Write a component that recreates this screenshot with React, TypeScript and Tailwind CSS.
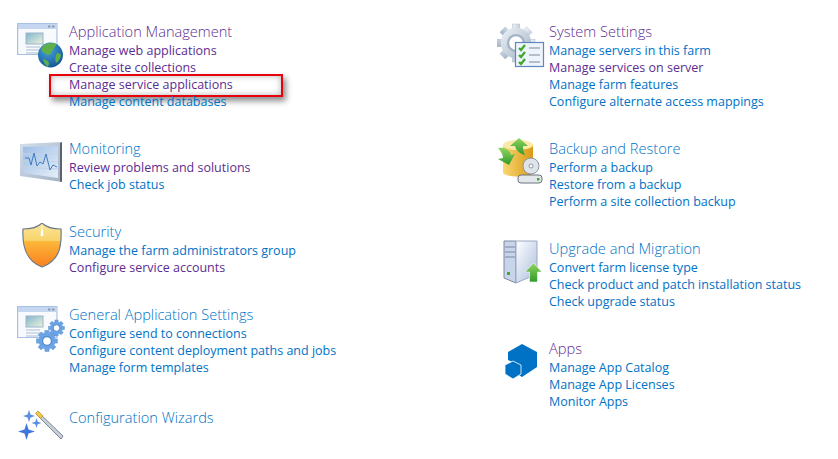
import { ReactNode } from "react";

const BLUE = "text-[#0072c6]";
const PURPLE = "text-[#5c2d91]";

type LinkItem = { text: string; visited?: boolean; boxed?: boolean };

const BrowserWindow = () => (
  <>
    <rect x="0.5" y="0.5" width="39.500" height="31" fill="#e4ebf7" stroke="#a9c0e6" />
    <rect x="1" y="1" width="38.500" height="5" fill="#c5d6f0" />
    <rect x="31" y="2.500" width="2.500" height="2" fill="#8c9ab0" />
    <rect x="35" y="2.500" width="2.500" height="2" fill="#8c9ab0" />
    <rect x="2" y="6" width="37" height="25" fill="#f8fafd" />
    <rect x="9" y="10" width="17" height="11" fill="url(#screenFill)" stroke="#9db4cc" />
    <path d="M9 24h14M9 27h18M9 30h12" stroke="#c5d2e2" strokeWidth="1.300" />
  </>
);

const Defs = () => (
  <svg width="0" height="0" className="absolute">
    <defs>
      <linearGradient id="screenFill" x1="0" y1="0" x2="1" y2="1">
        <stop offset="0" stopColor="#7fb5cf" />
        <stop offset="1" stopColor="#eef3d8" />
      </linearGradient>
      <radialGradient id="globeFill" cx="0.4" cy="0.3" r="0.8">
        <stop offset="0" stopColor="#4aa3e0" />
        <stop offset="1" stopColor="#0d4f8f" />
      </radialGradient>
      <linearGradient id="shieldFill" x1="0" y1="0" x2="0" y2="1">
        <stop offset="0" stopColor="#fbe79a" />
        <stop offset="0.4" stopColor="#f7d36a" />
        <stop offset="0.42" stopColor="#fdb83a" />
        <stop offset="1" stopColor="#f97f1e" />
      </linearGradient>
      <linearGradient id="monitorFill" x1="0" y1="0" x2="1" y2="1">
        <stop offset="0" stopColor="#9dbde6" />
        <stop offset="1" stopColor="#e6eff8" />
      </linearGradient>
      <linearGradient id="frameFill" x1="0" y1="0" x2="1" y2="1">
        <stop offset="0" stopColor="#d3deec" />
        <stop offset="1" stopColor="#a5b2c4" />
      </linearGradient>
      <linearGradient id="gearFill" x1="0" y1="0" x2="1" y2="1">
        <stop offset="0" stopColor="#eef2f7" />
        <stop offset="1" stopColor="#a3b3c6" />
      </linearGradient>
      <linearGradient id="barrelFill" x1="0" y1="0" x2="1" y2="0">
        <stop offset="0" stopColor="#f9d772" />
        <stop offset="1" stopColor="#d99a16" />
      </linearGradient>
      <linearGradient id="greenFill" x1="0" y1="0" x2="0" y2="1">
        <stop offset="0" stopColor="#8fd45f" />
        <stop offset="1" stopColor="#319a2b" />
      </linearGradient>
      <linearGradient id="serverFill" x1="0" y1="0" x2="1" y2="1">
        <stop offset="0" stopColor="#ffffff" />
        <stop offset="1" stopColor="#a9bddd" />
      </linearGradient>
    </defs>
  </svg>
);

const Cog = ({ cx, cy, r, fill, stroke }: { cx: number; cy: number; r: number; fill: string; stroke: string }) => (
  <g>
    {[0, 45, 90, 135].map((a) => (
      <rect
        key={a}
        x={cx - r * 0.2}
        y={cy - r}
        width={r * 0.4}
        height={r * 2}
        fill={fill}
        stroke={stroke}
        strokeWidth="0.400"
        transform={`rotate(${a} ${cx} ${cy})`}
      />
    ))}
    <circle cx={cx} cy={cy} r={r * 0.8} fill={fill} />
    <circle cx={cx} cy={cy} r={r * 0.42} fill="#fff" stroke={stroke} strokeWidth={r * 0.12} />
  </g>
);

const AppMgmtIcon = () => (
  <svg width="48" height="48" viewBox="0 0 48 48">
    <BrowserWindow />
    <circle cx="33.500" cy="32" r="12.500" fill="url(#globeFill)" />
    <path d="M27 22c3-2 9-3 12-1 1 2-2 3-3 6-3 2-1 5-5 5-4-2-6-3-7-6zM40 30c3 0 4 1 4 3-1 3-3 6-5 7-1-3-1-7 1-10zM26 36c2 0 4 1 6 4 0 2-1 3-1 4-2-1-4-4-5-8z" fill="#5fb04a" />
  </svg>
);

const MonitoringIcon = () => (
  <svg width="48" height="48" viewBox="0 0 48 48">
    <path d="M3 4l42-2v40L3 36z" fill="url(#frameFill)" />
    <path d="M45 2v40l-2-.4V3z" fill="#5a6470" />
    <path d="M6 7l35-1v32L6 33z" fill="url(#monitorFill)" />
    <path d="M6 14l35 0M6 21l35 1M6 27l35 2" stroke="#c3d3e4" />
    <path d="M8 18h4l2 7 3-12 3 13 3-4 3 2 3-10 4 16 3-5 4 2" fill="none" stroke="#3f7cc4" strokeWidth="1" />
  </svg>
);

const ShieldIcon = () => (
  <svg width="48" height="48" viewBox="0 2 48 48">
    <path d="M25 2c4 4 12 6 19 6 1 18-2 32-19 38C9 40 5 26 6 8c7 0 15-2 19-6z" fill="url(#shieldFill)" stroke="#6c7a8e" strokeWidth="1.200" />
    <path d="M25 3l1.500 12h-3z" fill="#fff" />
  </svg>
);

const GeneralSettingsIcon = () => (
  <svg width="48" height="48" viewBox="0 0 48 48">
    <BrowserWindow />
    <Cog cx={30} cy={35} r={10.500} fill="#6ba3e4" stroke="#4f88cc" />
    <Cog cx={39.500} cy={22} r={8} fill="#6ba3e4" stroke="#4f88cc" />
  </svg>
);

const WizardIcon = () => (
  <svg width="48" height="48" viewBox="0 0 48 48">
    <path d="M21 3l25 24-2 3L19 5z" fill="#c8d0da" stroke="#7d8794" />
    <path d="M21 2l5 5-2.500 2.500-5-5z" fill="#f3c94b" stroke="#a88a2a" strokeWidth="0.700" />
    <path d="M12 1l1.500 4.500L18 7l-4.500 1.500L12 13l-1.500-4.500L6 7l4.500-1.500z" fill="#5a8ee0" />
    <path d="M19.500 9l1.200 3.800 3.800 1.200-3.800 1.200-1.200 3.800-1.200-3.800-3.800-1.200 3.800-1.200z" fill="#5a8ee0" />
    <path d="M9.500 14l2 6.500 6.500 2-6.500 2-2 6.500-2-6.500-6.500-2 6.500-2z" fill="#3f78dc" />
  </svg>
);

const SystemIcon = () => (
  <svg width="52" height="48" viewBox="0 0 52 48">
    <Cog cx={19} cy={20} r={19} fill="url(#gearFill)" stroke="#a3b3c6" />
    <rect x="18.500" y="19.500" width="28" height="24" fill="#eef4fb" stroke="#5f86bd" strokeWidth="1.200" />
    <path d="M22 25l2 2 4-5M22 32l2 2 4-5M22 39l2 2 4-5" fill="none" stroke="#45a832" strokeWidth="2.400" />
    <path d="M32 25h11M32 32h11M32 39h11" stroke="#7d8794" strokeWidth="1.200" />
  </svg>
);

const BackupIcon = () => (
  <svg width="50" height="48" viewBox="0 -2 50 48" className="-mt-[2px]">
    <path d="M6 5h30v28c-4 5-26 5-30 0z" fill="url(#barrelFill)" />
    <ellipse cx="21" cy="5" rx="15" ry="5" fill="#fbe9a8" />
    <path d="M22-2l9 8h-5c0 4 1 7 2 9-4-1-9-4-10-9h-5z" fill="url(#greenFill)" />
    <path d="M1 8c7-1 12 2 13 7l4-1-6 11-11-6 5-1c0-3-2-7-5-10z" fill="url(#greenFill)" />
    <circle cx="34" cy="26" r="8" fill="#dfe4ea" stroke="#8d97a3" />
    <circle cx="34" cy="26" r="2" fill="#fff" stroke="#8d97a3" />
    <rect x="21" y="35" width="24" height="8" rx="3" fill="#e4e7ea" stroke="#6c7480" />
    <rect x="40" y="38" width="2.500" height="2.500" fill="#45a832" />
  </svg>
);

const UpgradeIcon = () => (
  <svg width="48" height="48" viewBox="0 0 48 48">
    <path d="M7 1h12v42L7 38z" fill="#c7d4ea" stroke="#7c88a0" />
    <path d="M19 1h21v33L19 43z" fill="url(#serverFill)" stroke="#9aa9c4" />
    <path d="M8 7h10M8 12h10M8 17h10" stroke="#7c88a0" strokeWidth="1.200" />
    <rect x="10" y="32" width="3" height="3" fill="#45a832" />
    <path d="M36.500 23l8.500 9h-4.500v10h-8V32H28z" fill="url(#greenFill)" stroke="#fff" strokeWidth="0.600" />
  </svg>
);

const AppsIcon = () => (
  <svg width="48" height="48" viewBox="0 0 48 48">
    <path d="M25 4l15 8v15l-15 10-5-3V24L11 20v-8z" fill="#0072c6" />
    <path d="M16 21l8 4v9l-8 5-8-5v-9z" fill="#0072c6" stroke="#fff" strokeWidth="0.800" />
  </svg>
);

const Section = ({
  icon,
  title,
  visited,
  links,
  className = "mb-[30px]",
}: {
  icon: ReactNode;
  title: string;
  visited?: boolean;
  links: LinkItem[];
  className?: string;
}) => (
  <section className={`flex ${className}`}>
    <div className="w-[52px] shrink-0">{icon}</div>
    <div className="flex flex-col">
      <h3 className={`h-[19px] text-[14.6px] leading-[16px] font-[350] ${visited ? PURPLE : BLUE}`}>{title}</h3>
      {links.map((l) => (
        <a key={l.text} className={`relative h-[17px] text-[12.5px] leading-[17px] whitespace-nowrap ${l.visited ? PURPLE : BLUE}`}>
          {l.text}
          {l.boxed && (
            <span className="absolute left-[-20px] top-[-2px] h-[23px] w-[234px] border-2 border-[#e8000d] shadow-[3px_4px_6px_rgba(0,0,0,0.45),inset_0_0_6px_rgba(0,0,0,0.3)]" />
          )}
        </a>
      ))}
    </div>
  </section>
);

export default function App() {
  return (
    <div className="relative flex h-[459px] w-[838px] overflow-hidden bg-white pt-[23px] font-['Open_Sans',sans-serif]">
      <Defs />
      <div className="w-[497px] shrink-0 pl-[17px]">
        <Section
          icon={<AppMgmtIcon />}
          title="Application Management"
          visited
          links={[
            { text: "Manage web applications", visited: true },
            { text: "Create site collections", visited: true },
            { text: "Manage service applications", visited: true, boxed: true },
            { text: "Manage content databases" },
          ]}
        />
        <Section
          icon={<MonitoringIcon />}
          title="Monitoring"
          links={[
            { text: "Review problems and solutions", visited: true },
            { text: "Check job status" },
          ]}
        />
        <Section
          icon={<ShieldIcon />}
          title="Security"
          links={[
            { text: "Manage the farm administrators group" },
            { text: "Configure service accounts", visited: true },
          ]}
        />
        <Section
          icon={<GeneralSettingsIcon />}
          title="General Application Settings"
          className="mb-[33px]"
          links={[
            { text: "Configure send to connections" },
            { text: "Configure content deployment paths and jobs" },
            { text: "Manage form templates" },
          ]}
        />
        <Section icon={<WizardIcon />} title="Configuration Wizards" links={[]} />
      </div>
      <div className="flex-1">
        <Section
          icon={<SystemIcon />}
          title="System Settings"
          visited
          links={[
            { text: "Manage servers in this farm" },
            { text: "Manage services on server", visited: true },
            { text: "Manage farm features" },
            { text: "Configure alternate access mappings" },
          ]}
        />
        <Section
          icon={<BackupIcon />}
          title="Backup and Restore"
          links={[
            { text: "Perform a backup" },
            { text: "Restore from a backup" },
            { text: "Perform a site collection backup" },
          ]}
        />
        <Section
          icon={<UpgradeIcon />}
          title="Upgrade and Migration"
          links={[
            { text: "Convert farm license type" },
            { text: "Check product and patch installation status" },
            { text: "Check upgrade status" },
          ]}
        />
        <Section
          icon={<AppsIcon />}
          title="Apps"
          visited
          links={[
            { text: "Manage App Catalog" },
            { text: "Manage App Licenses" },
            { text: "Monitor Apps" },
          ]}
        />
      </div>
    </div>
  );
}
